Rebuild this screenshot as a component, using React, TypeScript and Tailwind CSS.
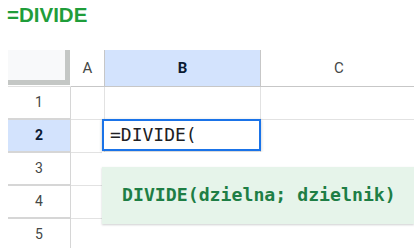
import React from "react";

const rows = [1, 2, 3, 4, 5];

export default function App() {
  return (
    <div className="relative w-[414px] h-[248px] overflow-hidden bg-white" style={{ fontFamily: "Roboto, 'Liberation Sans', Arial, sans-serif" }}>
      <div className="pl-[7px] pt-[3px] h-[50px]">
        <div className="text-[20.5px] leading-[24px] font-bold text-[#1f9d3a]" style={{ fontFamily: "'Liberation Sans', Arial, sans-serif" }}>
          =DIVIDE
        </div>
      </div>
      <div className="pl-[8px]">
        {/* header row */}
        <div className="flex h-[37px]">
          <div className="w-[63px] shrink-0 h-full border-b border-[#e1e1e1]">
            <div className="h-[35px] w-[62px] bg-[#f8f9fa] border-r-[5px] border-b-[5px] border-[#c4c7c5]" />
          </div>
          <div className="w-[34px] shrink-0 flex items-center justify-center border-r border-b border-[#c7c7c7] text-[15px] text-[#444746]">
            A
          </div>
          <div className="w-[156px] shrink-0 flex items-center justify-center bg-[#d3e3fd] border-r border-b border-[#c7c7c7] text-[15px] font-bold text-[#0b1a33]">
            B
          </div>
          <div className="w-[156px] shrink-0 flex items-center justify-center border-b border-[#c7c7c7] text-[15px] text-[#444746]">
            C
          </div>
        </div>
        {rows.map((r) => (
          <div key={r} className="flex h-[33px]">
            <div
              className={`w-[63px] shrink-0 flex items-center justify-center border-r border-b-2 border-[#d6d6d6] text-[14px] ${
                r === 2 ? "bg-[#d3e3fd] font-bold text-[#0b1a33]" : "text-[#444746]"
              }`}
            >
              {r}
            </div>
            <div className="w-[34px] shrink-0 border-r border-b border-[#e2e2e2]" />
            <div className="w-[156px] shrink-0 border-r border-b border-[#e2e2e2]" />
            <div className="w-[156px] shrink-0 border-b border-[#e2e2e2]" />
          </div>
        ))}
      </div>

      {/* cell editor */}
      <div className="absolute left-[102px] top-[119px] w-[159px] h-[32px] border-2 border-[#1a73e8] bg-white shadow-[0_1px_3px_rgba(60,64,67,0.3)] flex items-center pl-[6px]">
        <span className="text-[18px] leading-none text-[#202124]" style={{ fontFamily: "'DejaVu Sans Mono', monospace" }}>
          =DIVIDE(
        </span>
      </div>

      {/* formula help */}
      <div className="absolute left-[102px] top-[152px] right-0 bottom-0 bg-white">
        <div className="mt-[15px] h-[57px] bg-[#e6f4ea] shadow-[0_1px_2px_rgba(60,64,67,0.25)] flex items-center pl-[20px]">
          <span className="text-[18.2px] leading-none font-bold text-[#1e7e45] whitespace-nowrap" style={{ fontFamily: "'DejaVu Sans Mono', monospace" }}>
            DIVIDE(dzielna; dzielnik)
          </span>
        </div>
      </div>
    </div>
  );
}
